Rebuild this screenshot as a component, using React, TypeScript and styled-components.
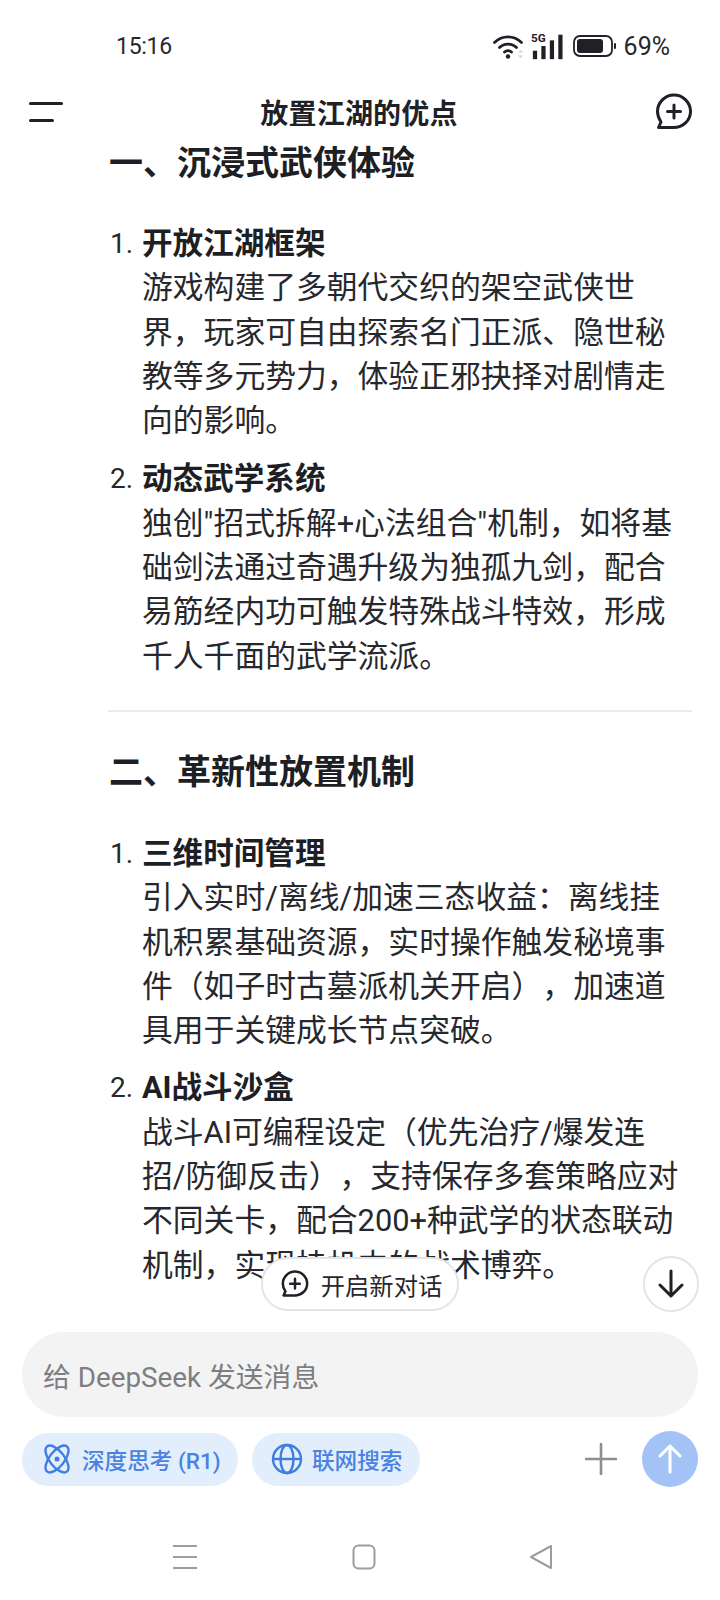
import React from "react";
import styled, { createGlobalStyle } from "styled-components";

const Global = createGlobalStyle`
  html, body { margin: 0; padding: 0; background: #fff; }
  body { font-family: Roboto, "Noto Sans CJK SC", sans-serif; color: #1d1f24; text-spacing-trim: space-all; }
`;

const Page = styled.div`
  width: 720px; height: 1600px; display: flex; flex-direction: column; overflow: hidden; background: #fff;
`;
const StatusBar = styled.div`
  height: 80px; flex: none; box-sizing: border-box; padding: 12px 50px 0 116px;
  display: flex; align-items: center; justify-content: space-between;
`;
const Time = styled.span`font-size: 23px; color: #26282c; letter-spacing: -0.3px;`;
const StatusRight = styled.div`display: flex; align-items: center; gap: 6px;`;
const SignalSlot = styled.div`display: flex; margin: 0 4px 0 0;`;
const Pct = styled.span`font-size: 25px; color: #26282c; margin-left: 1px;`;

const Header = styled.header`
  height: 64px; flex: none; box-sizing: border-box; padding: 0 27px 0 28px;
  display: flex; align-items: center; justify-content: space-between;
`;
const Title = styled.h1`
  margin: 0 0 0 -1px; font-size: 28px; font-weight: 700; letter-spacing: 0.2px; color: #1f2126;
`;
const Content = styled.main`
  flex: 1; min-height: 0; overflow: hidden; position: relative; box-sizing: border-box; padding: 0 36px 0 109px;
`;
const Heading = styled.h2`
  margin: 0; font-size: 34px; line-height: 38px; font-weight: 700; color: #1d1f24;
`;
const List = styled.ol`
  list-style: none; margin: 40px 0 0; padding: 0; display: flex; flex-direction: column; gap: 14px;
`;
const Item = styled.li`
  display: grid; grid-template-columns: 33px 1fr; font-size: 30.8px; line-height: 44.3px; color: #26282d;
`;
const Num = styled.span`font-size: 28px; padding-left: 1px;`;
const ItemTitle = styled.strong`display: block; font-weight: 700; color: #1d1f24; font-size: 30.6px;`;
const Rule = styled.hr`
  border: 0; height: 2px; background: #ebebeb; margin: 31px -8px 41px -1px;
`;
const Section2 = styled(List)`margin-top: 41px; gap: 13px;`;

const NewChat = styled.div`
  position: absolute; left: 261px; top: 1113px; width: 198px; height: 54px; box-sizing: border-box;
  background: #fff; border: 2px solid #e4e4e4; border-radius: 27px;
  display: flex; align-items: center; justify-content: center; gap: 12px; padding-left: 3px;
  font-size: 24.3px; color: #26282d;
`;
const Down = styled.div`
  position: absolute; left: 643px; top: 1112px; width: 56px; height: 56px; box-sizing: border-box;
  background: #fff; border: 2px solid #e4e4e4; border-radius: 50%;
  display: flex; align-items: center; justify-content: center;
`;

const Composer = styled.section`
  flex: none; box-sizing: border-box; padding: 12px 22px 0; display: flex; flex-direction: column;
`;
const Input = styled.div`
  height: 85px; border-radius: 42px; background: #f3f3f3; box-sizing: border-box; padding: 0 21px;
  display: flex; align-items: center; font-size: 27.800px; color: #7d7e81;
`;
const Tools = styled.div`
  display: flex; align-items: center; margin-top: 14px; height: 56px;
`;
const Chip = styled.div<{ $w: number }>`
  width: ${(p) => p.$w}px; height: 53px; box-sizing: border-box; border-radius: 27px; background: #e3eefc;
  display: flex; align-items: center; padding-left: 19px; gap: 9px; font-size: 22.600px; font-weight: 500; color: #4a82e0; margin-right: 14px;
`;
const Spacer = styled.div`flex: 1;`;
const Plus = styled.div`margin-right: 25px; display: flex;`;
const Send = styled.div`
  width: 56px; height: 56px; border-radius: 50%; background: #a3c2f5; display: flex; align-items: center; justify-content: center;
`;
const NavBar = styled.nav`
  flex: none; height: 113px; box-sizing: border-box; padding: 26px 167px 0 172px; display: flex; align-items: center; justify-content: space-between;
`;

const Wifi = () => (
  <svg width="32" height="26" viewBox="0 0 32 26" fill="none">
    <path d="M1.500 9.500C9 2 21 2 28.500 9.500" stroke="#1f2126" strokeWidth="2.800" strokeLinecap="round" />
    <path d="M6.500 14.500C11 10 19 10 23.500 14.500" stroke="#1f2126" strokeWidth="2.800" strokeLinecap="round" />
    <path d="M11.500 19C13.500 17.200 16.500 17.200 18.500 19" stroke="#1f2126" strokeWidth="2.800" strokeLinecap="round" />
    <circle cx="15" cy="23.500" r="2.200" fill="#1f2126" />
    <path d="M27.500 17l2.500 2.500h-5zM27.500 25l2.500-2.500h-5z" fill="#cfcfcf" />
  </svg>
);
const Signal = () => (
  <svg width="32" height="30" viewBox="0 0 34 30">
    <text x="0" y="11" fontSize="12.500" fontWeight="700" fontFamily="Roboto, sans-serif" fill="#1f2126">5G</text>
    <rect x="2" y="20" width="4.500" height="9" fill="#1f2126" />
    <rect x="11" y="15" width="4.500" height="14" fill="#1f2126" />
    <rect x="20" y="9" width="4.500" height="20" fill="#1f2126" />
    <rect x="29" y="3" width="4.500" height="26" fill="#1f2126" />
  </svg>
);
const Battery = () => (
  <svg width="44" height="24" viewBox="0 0 44 24">
    <rect x="1" y="2" width="38" height="20" rx="6" fill="none" stroke="#1f2126" strokeWidth="1.800" />
    <rect x="4" y="5" width="26" height="14" rx="3" fill="#1f2126" />
    <rect x="41" y="9" width="2" height="6" rx="1" fill="#1f2126" />
  </svg>
);
const ChatPlus = ({ size = 38, sw = 3 }: { size?: number; sw?: number }) => (
  <svg width={size} height={size} viewBox="0 0 38 38" fill="none" stroke="#1f2126" strokeWidth={sw} strokeLinecap="round" strokeLinejoin="round">
    <path d="M3.500 34.500h15C28 34.500 35.500 27.500 35.500 18.500S28 2 19 2 2.500 9.500 2.500 18.500c0 4 1.500 7.500 3.500 10.500z" />
    <path d="M19 12v13M12.500 18.500h13" />
  </svg>
);
const Menu = () => (
  <svg width="36" height="24" viewBox="0 0 36 24">
    <rect x="1" y="2" width="34" height="3" rx="1.500" fill="#1f2126" />
    <rect x="1" y="19" width="25" height="3" rx="1.500" fill="#1f2126" />
  </svg>
);
const ArrowDown = () => (
  <svg width="28" height="30" viewBox="0 0 28 30" fill="none" stroke="#1f2126" strokeWidth="3" strokeLinecap="round" strokeLinejoin="round">
    <path d="M14 2v25M3 16l11 11 11-11" />
  </svg>
);
const Atom = () => (
  <svg width="32" height="32" viewBox="0 0 32 32" fill="none" stroke="#3f7de0" strokeWidth="2.400">
    <ellipse cx="16" cy="16" rx="7.500" ry="16" transform="rotate(-38 16 16)" />
    <ellipse cx="16" cy="16" rx="7.500" ry="16" transform="rotate(38 16 16)" />
    <circle cx="16" cy="16" r="2.500" fill="#3f7de0" stroke="none" />
  </svg>
);
const Globe = () => (
  <svg width="32" height="32" viewBox="0 0 32 32" fill="none" stroke="#3f7de0" strokeWidth="2.400">
    <circle cx="16" cy="16" r="14" />
    <ellipse cx="16" cy="16" rx="6.500" ry="14" />
    <path d="M2 16h28" />
  </svg>
);
const PlusIcon = () => (
  <svg width="32" height="32" viewBox="0 0 32 32" stroke="#8e8e8e" strokeWidth="2.600" strokeLinecap="round">
    <path d="M16 1v30M1 16h30" />
  </svg>
);
const ArrowUp = () => (
  <svg width="24" height="30" viewBox="0 0 24 30" fill="none" stroke="#fff" strokeWidth="3" strokeLinecap="round" strokeLinejoin="round">
    <path d="M12 28V2M2 12L12 2l10 10" />
  </svg>
);
const NavMenu = () => (
  <svg width="26" height="26" viewBox="0 0 26 26" stroke="#9d9d9d" strokeWidth="2">
    <path d="M1 2h24M1 13h24M1 24h24" />
  </svg>
);
const NavHome = () => (
  <svg width="24" height="26" viewBox="0 0 24 26" fill="none" stroke="#9d9d9d" strokeWidth="2">
    <rect x="1.500" y="1.500" width="21" height="23" rx="5" />
  </svg>
);
const NavBack = () => (
  <svg width="24" height="26" viewBox="0 0 24 26" fill="none" stroke="#9d9d9d" strokeWidth="2" strokeLinejoin="round">
    <path d="M22 2v22L2 13z" />
  </svg>
);

type Entry = { title: string; body: string };
const first: Entry[] = [
  { title: "开放江湖框架", body: "游戏构建了多朝代交织的架空武侠世界，玩家可自由探索名门正派、隐世秘教等多元势力，体验正邪抉择对剧情走向的影响。" },
  { title: "动态武学系统", body: "独创\"招式拆解+心法组合\"机制，如将基础剑法通过奇遇升级为独孤九剑，配合易筋经内功可触发特殊战斗特效，形成千人千面的武学流派。" },
];
const second: Entry[] = [
  { title: "三维时间管理", body: "引入实时/离线/加速三态收益：离线挂机积累基础资源，实时操作触发秘境事件（如子时古墓派机关开启），加速道具用于关键成长节点突破。" },
  { title: "AI战斗沙盒", body: "战斗AI可编程设定（优先治疗/爆发连招/防御反击），支持保存多套策略应对不同关卡，配合200+种武学的状态联动机制，实现挂机中的战术博弈。" },
];

const Entries = ({ items }: { items: Entry[] }) => (
  <>
    {items.map((e, i) => (
      <Item key={e.title}>
        <Num>{i + 1}.</Num>
        <div>
          <ItemTitle>{e.title}</ItemTitle>
          {e.body}
        </div>
      </Item>
    ))}
  </>
);

export default function App() {
  return (
    <Page>
      <Global />
      <StatusBar>
        <Time>15:16</Time>
        <StatusRight>
          <Wifi />
          <SignalSlot><Signal /></SignalSlot>
          <Battery />
          <Pct>69%</Pct>
        </StatusRight>
      </StatusBar>
      <Header>
        <Menu />
        <Title>放置江湖的优点</Title>
        <ChatPlus />
      </Header>
      <Content>
        <Heading>一、沉浸式武侠体验</Heading>
        <List><Entries items={first} /></List>
        <Rule />
        <Heading>二、革新性放置机制</Heading>
        <Section2><Entries items={second} /></Section2>
        <NewChat><ChatPlus size={28} sw={3.400} />开启新对话</NewChat>
        <Down><ArrowDown /></Down>
      </Content>
      <Composer>
        <Input>给 DeepSeek 发送消息</Input>
        <Tools>
          <Chip $w={216}><Atom />深度思考 (R1)</Chip>
          <Chip $w={168}><Globe />联网搜索</Chip>
          <Spacer />
          <Plus><PlusIcon /></Plus>
          <Send><ArrowUp /></Send>
        </Tools>
      </Composer>
      <NavBar>
        <NavMenu />
        <NavHome />
        <NavBack />
      </NavBar>
    </Page>
  );
}
